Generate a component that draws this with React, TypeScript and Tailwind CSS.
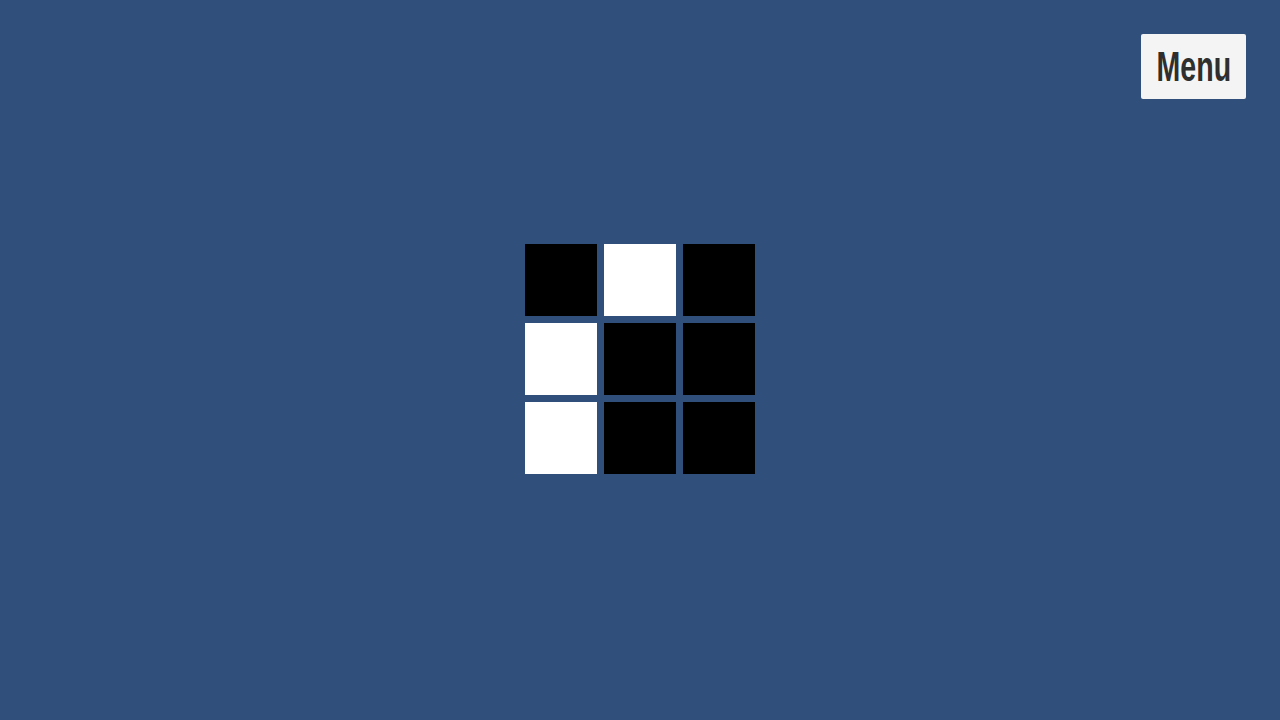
const cells = [1, 0, 1, 0, 1, 1, 0, 1, 1];

export default function App() {
  return (
    <div className="relative w-full h-screen bg-[#314f7b] flex items-center justify-center">
      <button className="absolute top-[34px] right-[34px] w-[105px] h-[65px] bg-[#f4f4f4] rounded-[2px] flex items-center justify-center text-[#2f2f2f]">
        <span
          className="inline-block text-[42px] font-bold leading-none scale-x-[0.68]"
          style={{ fontFamily: '"Liberation Sans Narrow", "Liberation Sans", sans-serif' }}
        >
          Menu
        </span>
      </button>
      <div className="grid grid-cols-[72px_72px_72px] grid-rows-[72px_72px_72px] gap-[7px] mt-[-2px]">
        {cells.map((dark, i) => (
          <div key={i} className={dark ? "bg-black" : "bg-white"} />
        ))}
      </div>
    </div>
  );
}
